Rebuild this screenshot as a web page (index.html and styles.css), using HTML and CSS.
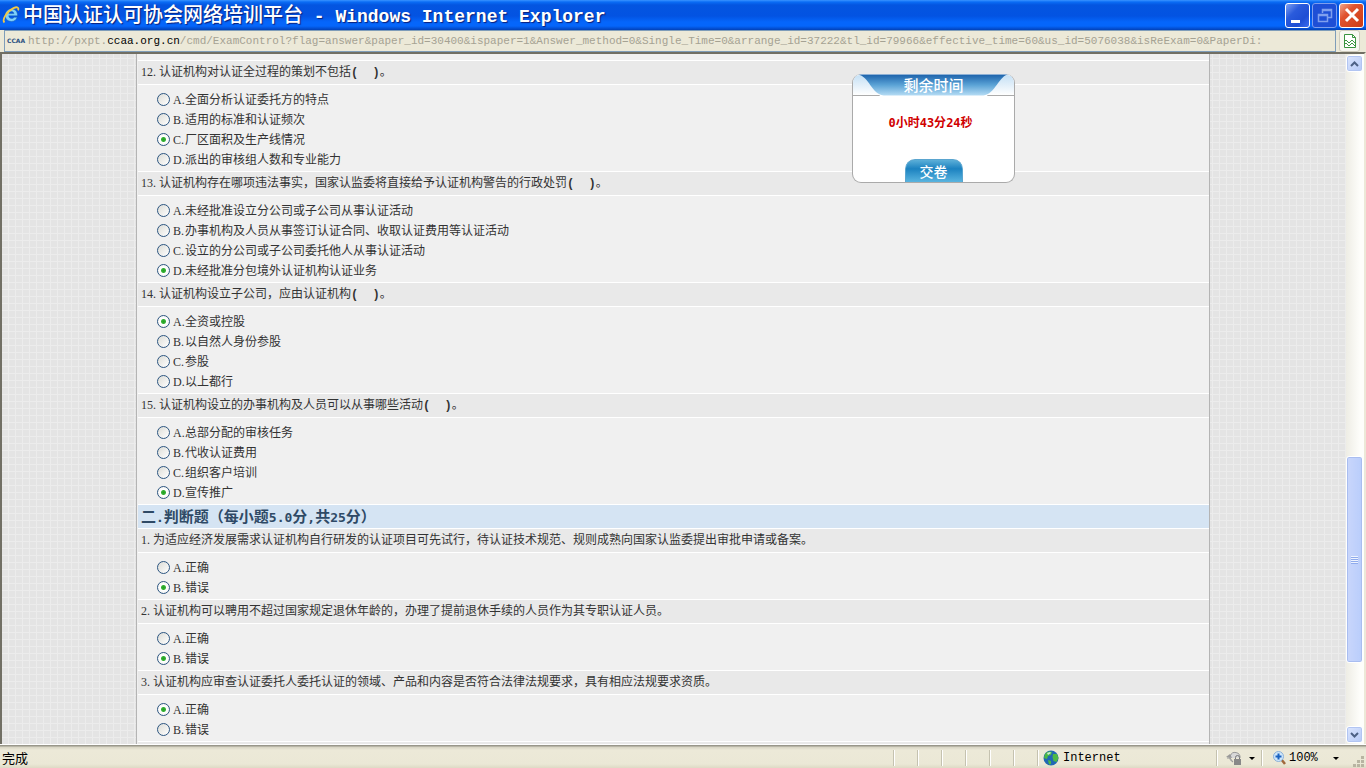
FILE: index.html
```html
<!DOCTYPE html>
<html lang="zh-CN">
<head>
<meta charset="utf-8">
<title>中国认证认可协会网络培训平台</title>
<link rel="stylesheet" href="styles.css">
</head>
<body>
<header class="titlebar">
  <svg class="ie-logo" viewBox="0 0 18 18" aria-hidden="true">
    <path d="M15.500 9.800H6.800c.2 1.800 1.300 2.700 2.800 2.700 1.200 0 2-.5 2.500-1.300h3.100c-.9 2.800-3 4.300-5.700 4.300C5.700 15.500 3.200 13 3.200 9.300 3.200 5.600 5.900 3 9.500 3c3.700 0 6.200 2.600 6 6.800zM6.900 7.600h5C11.700 6.200 10.800 5.500 9.400 5.500S7.200 6.200 6.900 7.600z" fill="#7fd0fa" stroke="#1a5fae" stroke-width=".5"/>
    <path d="M2.500 16.500C-.3 14 4.500 5.500 11.500 2.100c3.700-1.700 5.600-.8 4.600 2.300" fill="none" stroke="#f3c845" stroke-width="1.800"/>
  </svg>
  <h1 class="window-title">中国认证认可协会网络培训平台<span class="window-app"> - Windows Internet Explorer</span></h1>
  <div class="window-buttons">
    <button class="win-btn" aria-label="Minimize"><svg viewBox="0 0 22 22"><path d="M4 17.500h9" stroke="#fff" stroke-width="3"/></svg></button>
    <button class="win-btn win-btn-dim" aria-label="Restore"><svg viewBox="0 0 22 22"><path d="M8.500 9V5.500h9v8H14M8.500 6.500h9M4.500 10.500h9v7h-9zM4.500 11.500h9" fill="none" stroke="#7f9fee" stroke-width="1.500"/></svg></button>
    <button class="win-btn win-btn-close" aria-label="Close"><svg viewBox="0 0 22 22"><path d="M5 5l12 12M17 5l-12 12" stroke="#fff" stroke-width="3"/></svg></button>
  </div>
</header>
<div class="addressbar">
  <div class="address">
    <span class="favicon">CCAA</span>
    <span class="url">http://pxpt.<span class="domain">ccaa.org.cn</span>/cmd/ExamControl?flag=answer&amp;paper_id=30400&amp;ispaper=1&amp;Answer_method=0&amp;Single_Time=0&amp;arrange_id=37222&amp;tl_id=79966&amp;effective_time=60&amp;us_id=5076038&amp;isReExam=0&amp;PaperDi:</span>
  </div>
  <button class="compat" aria-label="兼容性视图"><svg viewBox="0 0 14 16"><path d="M1.500 1.500h8l3 3v10h-11z" fill="#fff" stroke="#3a9440"/><path d="M9.500 1.500v3h3" fill="none" stroke="#3a9440"/><path d="M1 9l2-2 3 3 3-3 4 4M1 12l2-2 3 3 3-3 4 4" fill="none" stroke="#3a9440"/></svg></button>
</div>
<div class="viewport">
  <main class="page">
    <form class="exam" id="exam"></form>
  </main>
  <aside class="timer">
    <svg class="timer-head" viewBox="0 0 163 22" preserveAspectRatio="none" aria-hidden="true">
      <defs><linearGradient id="hg" x1="0" y1="0" x2="0" y2="1"><stop offset="0" stop-color="#1c62ab"/><stop offset=".5" stop-color="#5ba3d6"/><stop offset="1" stop-color="#b5dcf4"/></linearGradient>
      <linearGradient id="eg" x1="0" y1="0" x2="0" y2="1"><stop offset="0" stop-color="#c5e0f5"/><stop offset="1" stop-color="#fff"/></linearGradient></defs>
      <path d="M0 21V7Q0 1 7 1h149q7 0 7 6v14z" fill="url(#eg)"/>
      <path d="M5 .5h153c-10 0-14 20-26 21H31C19 20.500 16 2 5 .5z" fill="url(#hg)"/>
      <path d="M0 21.500h27M136 21.500h27" stroke="#aaa"/>
    </svg>
    <h2 class="timer-title">剩余时间</h2>
    <p class="timer-value"><span class="digits">0</span>小时<span class="digits">43</span>分<span class="digits">24</span>秒</p>
    <button class="submit" type="submit" form="exam">交卷</button>
  </aside>
  <div class="scrollbar" aria-hidden="true">
    <button class="sb-btn" tabindex="-1"><svg viewBox="0 0 9 6"><path d="M1 5l3.500-3.500L8 5" fill="none" stroke="#4d6185" stroke-width="2"/></svg></button>
    <div class="sb-space sb-before"></div>
    <div class="sb-thumb"><i class="sb-grip"></i></div>
    <div class="sb-space sb-after"></div>
    <button class="sb-btn" tabindex="-1"><svg viewBox="0 0 9 6"><path d="M1 1l3.500 3.500L8 1" fill="none" stroke="#4d6185" stroke-width="2"/></svg></button>
  </div>
</div>
<footer class="statusbar">
  <span class="status-text">完成</span>
  <span class="pane"></span><span class="pane"></span><span class="pane"></span><span class="pane"></span><span class="pane"></span><span class="pane"></span>
  <span class="pane-zone">
    <svg class="globe" viewBox="0 0 16 16"><circle cx="8" cy="8" r="7.500" fill="#2168b4"/><path d="M2 4c2-3 5-3 7-2L8 5 5 6 4 9 1 8zM10 4l4 0 1.500 4-2 4-3-1-1-4zM5 10l3 1 0 3-2 .500z" fill="#4cb944"/><path d="M4 3l3-1 1 1-3 2z" fill="#c8ecd8"/></svg>
    Internet
  </span>
  <span class="pane-lock">
    <svg class="lock" viewBox="0 0 16 14"><path d="M1 7h3l3 4a5 5 0 1 1 7-4" fill="#d8d8d8" stroke="#999"/><path d="M0 6l4-3 2 4z" fill="#999"/><path d="M9.500 8V6.500a2 2 0 0 1 4 0V8" fill="none" stroke="#777"/><path d="M8 8h7v6H8z" fill="#888"/></svg>
    <i class="caret"></i>
  </span>
  <span class="pane-zoom">
    <svg class="magnifier" viewBox="0 0 13 14"><path d="M8 8l4 5" stroke="#a0683c" stroke-width="2.500"/><circle cx="5.500" cy="5.500" r="5" fill="#cfe6fa" stroke="#8ab0d8"/><path d="M5.500 2.500v6M2.500 5.500h6" stroke="#1a62c0" stroke-width="2"/></svg>
    <span class="zoom-value">100%</span>
    <i class="caret"></i>
  </span>
  <svg class="resize" viewBox="0 0 12 12"><path d="M8 0h3v3H8zM4 4h3v3H4zM8 4h3v3H8zM0 8h3v3H0zM4 8h3v3H4zM8 8h3v3H8z" fill="#b8b4a2"/></svg>
</footer>
<script src="exam.js"></script>
</body>
</html>
```
FILE: styles.css
```css
* { box-sizing: border-box; }
html, body { height: 100%; }
body {
  margin: 0;
  display: flex;
  flex-direction: column;
  overflow: hidden;
  background: #ece9d8;
  color: #333;
  font: 12px/20px "Liberation Mono", "Noto Sans CJK SC", sans-serif;
}
button { padding: 0; font: inherit; display: flex; align-items: center; justify-content: center; }
h1, h2, p { margin: 0; }

.titlebar {
  flex: none;
  height: 30px;
  display: flex;
  align-items: center;
  padding: 0 2px;
  background: linear-gradient(#3a93ff 0, #0a6cf5 2px, #0455e0 5px, #0353e2 16px, #0566fb 22px, #0566fb 26px, #0241b8 30px);
}
.ie-logo { width: 18px; height: 18px; margin-right: 3px; }
.window-title {
  flex: 1;
  font: 500 20px/28px "Noto Sans CJK SC", sans-serif;
  color: #fff;
  text-shadow: 1px 1px 1px #0a1f7a;
  white-space: pre;
}
.window-app { font: bold 18px/28px "Liberation Mono", monospace; }
.window-buttons { display: flex; gap: 2px; }
.win-btn {
  width: 25px;
  height: 25px;
  border: 1px solid #fff;
  border-radius: 3px;
  background: linear-gradient(135deg, #7fa1f2, #2a5bdc 35%, #1e4ed4 70%, #3a6cf0);
}
.win-btn svg { width: 22px; height: 22px; }
.win-btn-dim { border-color: #7d9eee; background: #1e4fd6; }
.win-btn-close { background: linear-gradient(135deg, #f0a58c, #e0532f 35%, #cc3c14); }

.addressbar {
  flex: none;
  height: 22px;
  display: flex;
  gap: 3px;
  padding: 0 6px 0 4px;
}
.address {
  flex: 1;
  min-width: 0;
  display: flex;
  align-items: center;
  border: 1px solid #7f9db9;
  overflow: hidden;
}
.favicon { flex: none; width: 23px; padding-left: 2px; font: bold 6px/20px "DejaVu Sans", sans-serif; color: #2a5080; }
.url { font: 11px/20px "Liberation Mono", monospace; color: #a5a293; white-space: nowrap; overflow: hidden; }
.domain { color: #000; }
.compat { width: 21px; border: 1px solid #d0cdbf; border-radius: 3px; background: #f8f7f2; }
.compat svg { flex: none; width: 14px; height: 16px; }

.viewport {
  flex: 1;
  min-height: 0;
  position: relative;
  display: flex;
  border: 2px solid #716f64;
  border-right-color: #ece9d8;
  border-bottom: 0;
  overflow: hidden;
  background: #e4e4e4;
}
.page {
  flex: 1;
  min-width: 0;
  padding: 0 136px 0 134px;
  background-color: #e4e4e4;
  background-image: linear-gradient(#ececec 1px, transparent 1px), linear-gradient(90deg, #ececec 1px, transparent 1px);
  background-size: 7px 7px;
  background-position: 6px 4px;
}
.exam { min-height: 100%; padding: 6px 0 0 1px; border: solid #b4b4b4; border-width: 0 1px; background: #f0f0f0; }
.question, .section {
  margin: 0;
  padding: 0 3px;
  border: solid #fff;
  border-width: 1px 0;
  line-height: 22px;
  height: 25px;
  background: #e9e9e9;
  white-space: pre;
}
.section { height: 24px; border-bottom: 0; background: #d5e4f3; color: #2f4a66; font: bold 15px/22px "Noto Sans CJK SC", sans-serif; }
.num { display: inline-block; width: 12px; font-family: "Liberation Serif", serif; }
.num-wide { width: 18px; }
.digits { font-family: "DejaVu Sans Mono", monospace; }
.section .digits { font-size: 13px; }
.blank { font: bold 12px/20px "Liberation Mono", monospace; }
.options { padding: 4px 0 2px 19px; }
.option { display: flex; align-items: center; height: 20px; }
.option label { padding: 2px 0 0 3px; line-height: 20px; white-space: pre; }
.option input {
  appearance: none;
  width: 13px;
  height: 13px;
  margin: 0;
  border: 1px solid #2c5580;
  border-radius: 50%;
  background: linear-gradient(135deg, #dcdcd6, #fff);
}
.option input:checked { background: radial-gradient(circle, #22a022 0, #35b035 2px, #fff 3px, #f4f4f2 6px); }

.timer {
  position: absolute;
  top: 20px;
  right: 349px;
  width: 163px;
  height: 109px;
  display: flex;
  flex-direction: column;
  align-items: center;
  border: 1px solid #aaa;
  border-top: 0;
  border-radius: 9px;
  background: #fff;
  overflow: hidden;
}
.timer-head { position: absolute; top: 0; left: 0; width: 100%; height: 22px; }
.timer-title { position: relative; font: 500 15px/22px "Noto Sans CJK SC", sans-serif; color: #fff; }
.timer-value { margin-top: 16px; padding-right: 6px; font-weight: bold; color: #d00000; line-height: 22px; }
.submit {
  margin-top: auto;
  width: 58px;
  height: 23px;
  border: 1px solid #5aa5cf;
  border-bottom: 0;
  border-radius: 10px 10px 0 0;
  background: linear-gradient(#5cafd8, #1c82c0 40%, #59b4df);
  color: #fff;
  font: 500 14px/22px "Noto Sans CJK SC", sans-serif;
}

.scrollbar { flex: none; width: 18px; display: flex; flex-direction: column; padding: 1px 0; background: linear-gradient(90deg, #eeede5, #fefefb 80%); }
.sb-btn { width: 17px; height: 17px; flex: none; border: 1px solid #fff; border-radius: 3px; background: linear-gradient(135deg, #dce6fe, #b5c9f7); box-shadow: inset 0 0 0 1px #b2c5f2; }
.sb-btn svg { width: 9px; height: 6px; }
.sb-before { flex: 385; }
.sb-after { flex: 63; }
.sb-thumb { flex: 206; width: 17px; display: flex; align-items: center; justify-content: center; border: 1px solid #fff; border-radius: 3px; background: linear-gradient(90deg, #c9d6fb, #b9cdfb); box-shadow: inset 0 0 0 1px #a9bdf0; }
.sb-grip { width: 7px; height: 8px; background: repeating-linear-gradient(#eef3fe 0 1px, #8fabec 1px 2px); }

.statusbar {
  flex: none;
  height: 24px;
  display: flex;
  align-items: center;
  padding: 4px 1px 0 2px;
  background: linear-gradient(#fff 0, #fff 1px, #99978a 1px, #99978a 2px, #d8d5c4 3px, #ece9d8 6px, #ebe8d6 20px, #dedac5);
  color: #000;
}
.status-text { flex: 1; font: 13px/18px "Noto Sans CJK SC", sans-serif; }
.pane, .pane-zone, .pane-lock, .pane-zoom { height: 16px; display: flex; align-items: center; border-left: 1px solid #c5c2b0; box-shadow: inset 1px 0 #fff; }
.pane { width: 24px; }
.pane-zone { width: 179px; padding-left: 5px; gap: 4px; }
.globe { width: 16px; height: 16px; }
.pane-lock { width: 45px; padding-left: 9px; gap: 7px; }
.lock { width: 16px; height: 14px; }
.pane-zoom { width: 92px; padding-left: 11px; gap: 3px; }
.magnifier { width: 13px; height: 14px; }
.zoom-value { flex: 1; }
.pane-zoom .caret { margin-right: 14px; }
.caret { border: solid transparent; border-width: 3px 3px 0; border-top-color: #000; }
.resize { width: 12px; height: 12px; align-self: flex-end; }
```
FILE: exam.js
```js
const single = [
  ["12.", "认证机构对认证全过程的策划不包括", ["全面分析认证委托方的特点", "适用的标准和认证频次", "厂区面积及生产线情况", "派出的审核组人数和专业能力"], 2],
  ["13.", "认证机构存在哪项违法事实，国家认监委将直接给予认证机构警告的行政处罚", ["未经批准设立分公司或子公司从事认证活动", "办事机构及人员从事签订认证合同、收取认证费用等认证活动", "设立的分公司或子公司委托他人从事认证活动", "未经批准分包境外认证机构认证业务"], 3],
  ["14.", "认证机构设立子公司，应由认证机构", ["全资或控股", "以自然人身份参股", "参股", "以上都行"], 0],
  ["15.", "认证机构设立的办事机构及人员可以从事哪些活动", ["总部分配的审核任务", "代收认证费用", "组织客户培训", "宣传推广"], 3]
];
const judge = [
  ["1.", "为适应经济发展需求认证机构自行研发的认证项目可先试行，待认证技术规范、规则成熟向国家认监委提出审批申请或备案。", ["正确", "错误"], 1],
  ["2.", "认证机构可以聘用不超过国家规定退休年龄的，办理了提前退休手续的人员作为其专职认证人员。", ["正确", "错误"], 1],
  ["3.", "认证机构应审查认证委托人委托认证的领域、产品和内容是否符合法律法规要求，具有相应法规要求资质。", ["正确", "错误"], 0],
  ["4.", "", [], -1]
];
const num = t => `<span class="num${t.length > 2 ? " num-wide" : ""}">${t}</span>`;
const digits = t => `<span class="digits">${t}</span>`;
const render = (list, group, tail) => list.map(([no, text, options, picked], q) =>
  `<p class="question">${text ? num(no) + text + tail : ""}</p><div class="options">` +
  options.map((o, i) => {
    const id = `${group}${q}-${i}`;
    return `<div class="option"><input type="radio" id="${id}" name="${group}${q}"${i === picked ? " checked" : ""}><label for="${id}">${num("ABCD"[i] + ".")}${o}</label></div>`;
  }).join("") + "</div>").join("");
document.getElementById("exam").innerHTML =
  render(single, "s", '<span class="blank">(  )</span>。') +
  `<h2 class="section">二${digits(".")}判断题（每小题${digits("5.0")}分${digits(",")}共${digits("25")}分）</h2>` +
  render(judge, "j", "");
```
